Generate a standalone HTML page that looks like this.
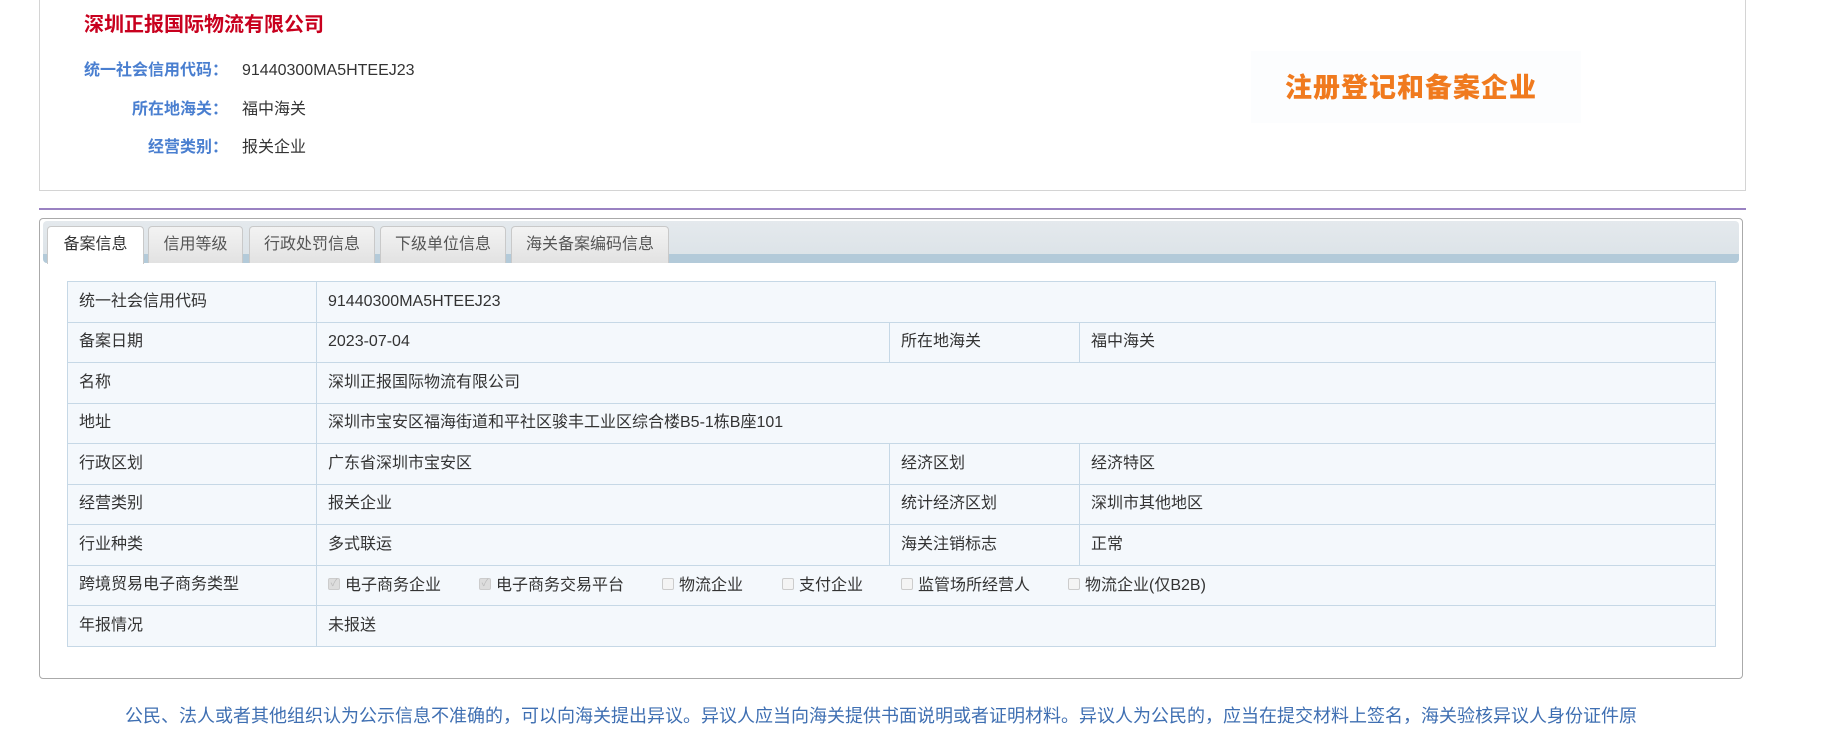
<!DOCTYPE html>
<html><head><meta charset="utf-8"><style>
*{margin:0;padding:0;box-sizing:border-box}
body{width:1824px;height:732px;overflow:hidden;background:#fff;font-family:"Liberation Sans","Noto Sans CJK SC",sans-serif;color:#333;position:relative;line-height:22px}
.abs{position:absolute}
.top{left:39px;top:-2px;width:1707px;height:193px;border:1px solid #d4d4d4;border-top:none}
.title{left:84px;top:12px;font-size:20px;font-weight:bold;color:#c8001e;white-space:nowrap;line-height:26px}
.lbl{font-size:16px;font-weight:bold;color:#4a7fd0;text-align:right;width:144px;left:84px;white-space:nowrap}
.val{left:242px;font-size:16px;color:#333;white-space:nowrap}
.logo{left:1251px;top:51px;width:330px;height:72px;background:#fcfdfe}
.logo span{position:absolute;left:34px;top:22px;font-size:27px;line-height:30px;font-weight:900;color:#f07a1e;letter-spacing:1px;white-space:nowrap}
.hr{left:39px;top:208px;width:1707px;height:2px;background:#9a82c2}
.box{left:39px;top:218px;width:1704px;height:461px;border:1px solid #aaa;border-radius:4px}
.bar{left:43px;top:221px;width:1696px;height:42px;border-radius:4px;background:linear-gradient(#e4e9ed,#dbe2e7);}
.bar:after{content:"";position:absolute;left:0;right:0;bottom:0;height:9px;background:#b3cad9;border-radius:0 0 4px 4px}
.tab{top:226px;height:37px;border:1px solid #c9c9c9;border-bottom:none;border-radius:4px 4px 0 0;background:linear-gradient(#f3f3f3,#e2e2e2);font-size:16px;color:#555;text-align:center;line-height:36px;z-index:2}
.tab.on{background:#fff;color:#333;height:38px}
table{position:absolute;left:67px;top:281px;width:1649px;border-collapse:collapse;background:#f4f8fc;font-size:16px}
td{border:1px solid #c6d8e6;height:40.5px;padding:0 11px;color:#333;white-space:nowrap;line-height:22px;vertical-align:middle}
.cb{display:inline-block;width:12px;height:12px;border:1px solid #ccc;border-radius:2px;background:#f4f4f4;vertical-align:middle;margin:-3px 5px 0 0;font-size:10px;line-height:10px;color:#bbb;text-align:center}
.cb.c{background:#ddd}
.foot{left:125px;top:704px;font-size:18px;color:#3f6fb2;white-space:nowrap;line-height:24px}
</style></head><body>
<div class="abs top"></div>
<div class="abs title">深圳正报国际物流有限公司</div>
<div class="abs lbl" style="top:60px">统一社会信用代码：</div><div class="abs val" style="top:60px">91440300MA5HTEEJ23</div>
<div class="abs lbl" style="top:99px">所在地海关：</div><div class="abs val" style="top:99px">福中海关</div>
<div class="abs lbl" style="top:137px">经营类别：</div><div class="abs val" style="top:137px">报关企业</div>
<div class="abs logo"><span>注册登记和备案企业</span></div>
<div class="abs hr"></div>
<div class="abs box"></div>
<div class="abs bar"></div>
<div class="abs tab on" style="left:47px;width:97px">备案信息</div>
<div class="abs tab" style="left:148px;width:95px">信用等级</div>
<div class="abs tab" style="left:249px;width:126px">行政处罚信息</div>
<div class="abs tab" style="left:380px;width:126px">下级单位信息</div>
<div class="abs tab" style="left:511px;width:158px">海关备案编码信息</div>
<table>
<colgroup><col style="width:249px"><col style="width:573px"><col style="width:190px"><col></colgroup>
<tr><td>统一社会信用代码</td><td colspan="3">91440300MA5HTEEJ23</td></tr>
<tr><td>备案日期</td><td>2023-07-04</td><td>所在地海关</td><td>福中海关</td></tr>
<tr><td>名称</td><td colspan="3">深圳正报国际物流有限公司</td></tr>
<tr><td>地址</td><td colspan="3">深圳市宝安区福海街道和平社区骏丰工业区综合楼B5-1栋B座101</td></tr>
<tr><td>行政区划</td><td>广东省深圳市宝安区</td><td>经济区划</td><td>经济特区</td></tr>
<tr><td>经营类别</td><td>报关企业</td><td>统计经济区划</td><td>深圳市其他地区</td></tr>
<tr><td>行业种类</td><td>多式联运</td><td>海关注销标志</td><td>正常</td></tr>
<tr><td>跨境贸易电子商务类型</td><td colspan="3" style="position:relative"><span class="abs" style="left:11px;top:9px"><span class="cb c">✓</span>电子商务企业</span><span class="abs" style="left:162px;top:9px"><span class="cb c">✓</span>电子商务交易平台</span><span class="abs" style="left:345px;top:9px"><span class="cb"></span>物流企业</span><span class="abs" style="left:465px;top:9px"><span class="cb"></span>支付企业</span><span class="abs" style="left:584px;top:9px"><span class="cb"></span>监管场所经营人</span><span class="abs" style="left:751px;top:9px"><span class="cb"></span>物流企业(仅B2B)</span>&nbsp;</td></tr>
<tr><td>年报情况</td><td colspan="3">未报送</td></tr>
</table>
<div class="abs foot">公民、法人或者其他组织认为公示信息不准确的，可以向海关提出异议。异议人应当向海关提供书面说明或者证明材料。异议人为公民的，应当在提交材料上签名，海关验核异议人身份证件原</div>
</body></html>
